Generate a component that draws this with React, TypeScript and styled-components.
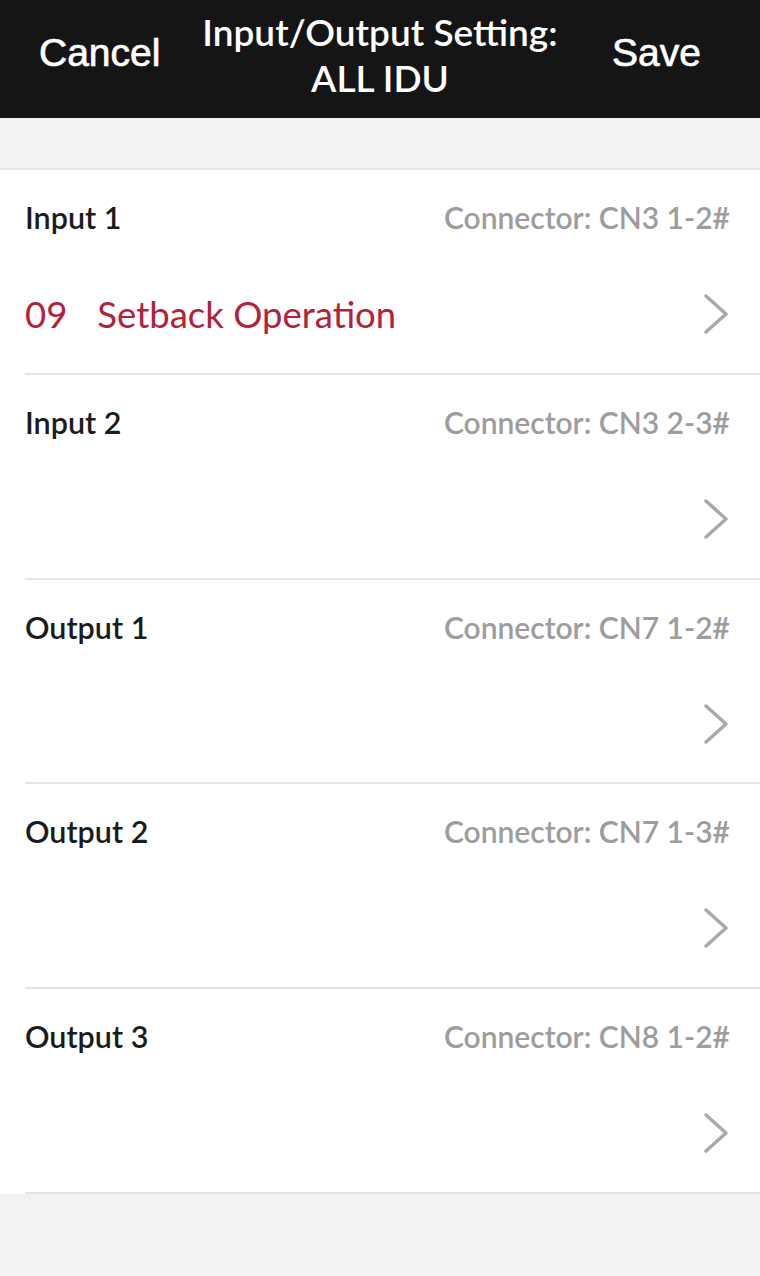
import React from "react";
import styled, { createGlobalStyle } from "styled-components";

const Global = createGlobalStyle`
  html, body { margin: 0; padding: 0; background: #f2f2f4; }
  body { font-family: Lato, "Noto Sans", sans-serif; }
`;

const Page = styled.div`
  width: 760px;
  min-height: 1276px;
  background: #f2f2f4;
`;

const NavBar = styled.header`
  height: 118px;
  background: #151515;
  display: grid;
  grid-template-columns: 1fr auto 1fr;
  align-items: center;
  padding: 0 39px 12px 39px;
  box-sizing: border-box;
`;

const NavButton = styled.span<{ $align: "left" | "right" }>`
  font-family: "Liberation Sans", Arial, sans-serif;
  font-size: 39px;
  color: #fff;
  -webkit-text-stroke: 0.7px #fff;
  justify-self: ${(p) => (p.$align === "left" ? "start" : "end")};
  margin-right: ${(p) => (p.$align === "right" ? "20px" : "0")};
`;

const Title = styled.h1`
  margin: 0;
  text-align: center;
  font-family: Lato, sans-serif;
  font-weight: 600;
  font-size: 37px;
  line-height: 46px;
  color: #fff;
  margin-top: 4px;
`;

const Spacer = styled.div`
  height: 50px;
  border-bottom: 2px solid #e4e4e8;
`;

const List = styled.div`
  background: #fff;
`;

const Row = styled.div`
  height: 204.8px;
  padding-left: 25px;
  box-sizing: border-box;
  display: flex;
  flex-direction: column;
`;

const RowInner = styled.div`
  flex: 1;
  display: flex;
  flex-direction: column;
  padding-right: 30px;
  border-bottom: 2px solid #e4e4e8;
`;

const Header = styled.div`
  display: flex;
  justify-content: space-between;
  align-items: center;
  height: 94px;
`;

const Label = styled.span`
  font-size: 30.5px;
  font-weight: 600;
  color: #1b1b1b;
`;

const Connector = styled.span`
  font-size: 30px;
  font-weight: 600;
  color: #9d9d9d;
`;

const ValueLine = styled.div`
  display: flex;
  align-items: center;
  justify-content: space-between;
  height: 100px;
`;

const Value = styled.span`
  font-size: 36.5px;
  color: #b3223a;
  display: flex;
  gap: 30px;
`;

const Chevron = () => (
  <svg width="28" height="42" viewBox="0 0 28 42" fill="none">
    <path d="M4 3 L24 21 L4 39" stroke="#a9a9a9" strokeWidth="3.5" strokeLinecap="round" strokeLinejoin="round" />
  </svg>
);

const items = [
  { label: "Input 1", conn: "Connector: CN3 1-2#", code: "09", value: "Setback Operation" },
  { label: "Input 2", conn: "Connector: CN3 2-3#" },
  { label: "Output 1", conn: "Connector: CN7 1-2#" },
  { label: "Output 2", conn: "Connector: CN7 1-3#" },
  { label: "Output 3", conn: "Connector: CN8 1-2#" },
];

export default function App() {
  return (
    <Page>
      <Global />
      <NavBar>
        <NavButton $align="left">Cancel</NavButton>
        <Title>
          Input/Output Setting:
          <br />
          ALL IDU
        </Title>
        <NavButton $align="right">Save</NavButton>
      </NavBar>
      <Spacer />
      <List>
        {items.map((it) => (
          <Row key={it.label}>
            <RowInner>
              <Header>
                <Label>{it.label}</Label>
                <Connector>{it.conn}</Connector>
              </Header>
              <ValueLine>
                <Value>
                  {it.code && <span>{it.code}</span>}
                  {it.value && <span>{it.value}</span>}
                </Value>
                <Chevron />
              </ValueLine>
            </RowInner>
          </Row>
        ))}
      </List>
    </Page>
  );
}
